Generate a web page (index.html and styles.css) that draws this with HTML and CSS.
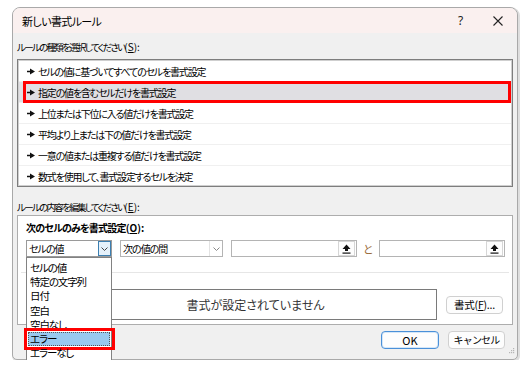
FILE: index.html
```html
<!DOCTYPE html>
<html>
<head>
    <title>新しい書式ルール</title>
    <meta charset="UTF-8">
    <link rel="stylesheet" href="styles.css">
</head>
<body>
    <div class="dialog">
        <div class="titlebar">
            <span class="title">新しい書式ルール</span>
            <span class="help">?</span>
            <span class="close">
                <svg width="10" height="10" viewBox="0 0 10 10"><path d="M0.5 0.5 L9.5 9.5 M9.5 0.5 L0.5 9.5" stroke="#222" stroke-width="1.1" fill="none"/></svg>
            </span>
        </div>

        <div class="content">
            <div class="label first">ルールの種類を選択してください<span class="key">(<u>S</u>):</span></div>
            <ul class="rule-list">
                <li><svg class="bullet" width="8" height="7" viewBox="0 0 8 7"><path d="M0 2.7 H3 V0.5 L8 3.5 L3 6.5 V4.3 H0 Z" fill="#111"/></svg>セルの値に基づいてすべてのセルを書式設定</li>
                <li class="selected"><svg class="bullet" width="8" height="7" viewBox="0 0 8 7"><path d="M0 2.7 H3 V0.5 L8 3.5 L3 6.5 V4.3 H0 Z" fill="#111"/></svg>指定の値を含むセルだけを書式設定<span class="mark"></span></li>
                <li><svg class="bullet" width="8" height="7" viewBox="0 0 8 7"><path d="M0 2.7 H3 V0.5 L8 3.5 L3 6.5 V4.3 H0 Z" fill="#111"/></svg>上位または下位に入る値だけを書式設定</li>
                <li><svg class="bullet" width="8" height="7" viewBox="0 0 8 7"><path d="M0 2.7 H3 V0.5 L8 3.5 L3 6.5 V4.3 H0 Z" fill="#111"/></svg>平均より上または下の値だけを書式設定</li>
                <li><svg class="bullet" width="8" height="7" viewBox="0 0 8 7"><path d="M0 2.7 H3 V0.5 L8 3.5 L3 6.5 V4.3 H0 Z" fill="#111"/></svg>一意の値または重複する値だけを書式設定</li>
                <li><svg class="bullet" width="8" height="7" viewBox="0 0 8 7"><path d="M0 2.7 H3 V0.5 L8 3.5 L3 6.5 V4.3 H0 Z" fill="#111"/></svg>数式を使用して、書式設定するセルを決定</li>
            </ul>

            <div class="label second">ルールの内容を編集してください<span class="key">(<u>E</u>):</span></div>
            <div class="panel">
                <div class="heading">次のセルのみを書式設定<span class="key">(<u>O</u>):</span></div>
                <div class="criteria">
                    <div class="combo combo-type">
                        <span class="combo-text">セルの値</span>
                        <span class="combo-btn active">
                            <svg width="7" height="4" viewBox="0 0 7 4"><path d="M0.5 0.5 L3.5 3.5 L6.5 0.5" stroke="#444" fill="none"/></svg>
                        </span>
                        <ul class="dropdown">
                            <li>セルの値</li>
                            <li>特定の文字列</li>
                            <li>日付</li>
                            <li>空白</li>
                            <li>空白なし</li>
                            <li class="picked">エラー<span class="mark"></span></li>
                            <li>エラーなし</li>
                        </ul>
                    </div>
                    <div class="combo combo-op">
                        <span class="combo-text">次の値の間</span>
                        <span class="combo-btn">
                            <svg width="7" height="4" viewBox="0 0 7 4"><path d="M0.5 0.5 L3.5 3.5 L6.5 0.5" stroke="#888" fill="none"/></svg>
                        </span>
                    </div>
                    <div class="ref-input">
                        <span class="ref-btn">
                            <svg width="9" height="10" viewBox="0 0 9 10"><path d="M4.5 0.5 L8.5 5 L6 5 L6 7 L3 7 L3 5 L0.5 5 Z" fill="#111"/><rect x="0.5" y="8.5" width="8" height="1.2" fill="#111"/></svg>
                        </span>
                    </div>
                    <span class="and">と</span>
                    <div class="ref-input">
                        <span class="ref-btn">
                            <svg width="9" height="10" viewBox="0 0 9 10"><path d="M4.5 0.5 L8.5 5 L6 5 L6 7 L3 7 L3 5 L0.5 5 Z" fill="#111"/><rect x="0.5" y="8.5" width="8" height="1.2" fill="#111"/></svg>
                        </span>
                    </div>
                </div>
                <div class="divider"></div>
                <div class="preview-row">
                    <div class="preview-box">書式が設定されていません</div>
                    <button class="btn btn-format">書式(<u>F</u>)...</button>
                </div>
            </div>

            <div class="footer">
                <button class="btn btn-ok">OK</button>
                <button class="btn btn-cancel">キャンセル</button>
                <svg class="grip" width="6" height="6" viewBox="0 0 6 6"><g fill="#b5b5b5"><rect x="4" y="0" width="1.2" height="1.2"/><rect x="2" y="2" width="1.2" height="1.2"/><rect x="4" y="2" width="1.2" height="1.2"/><rect x="0" y="4" width="1.2" height="1.2"/><rect x="2" y="4" width="1.2" height="1.2"/><rect x="4" y="4" width="1.2" height="1.2"/></g></svg>
            </div>
        </div>
    </div>
</body>
</html>
```

FILE: styles.css
```css
body {
    margin: 0;
    background: #fff;
    font-family: "Noto Sans CJK JP", "Noto Sans", sans-serif;
    font-size: 10px;
    color: #000;
    font-feature-settings: "palt";
}
u { text-decoration: underline; text-underline-offset: 1px; }
.key { letter-spacing: 0; }

.dialog {
    box-sizing: border-box;
    width: 506px;
    height: 353px;
    margin: 7px 0 0 12px;
    border: 1px solid #a9a9a9;
    border-radius: 8px 8px 5px 5px;
    background: #f0f0f0;
    box-shadow: 1px 1px 0 1px #dedede;
}

.titlebar {
    display: flex;
    align-items: center;
    height: 25px;
    padding-left: 9px;
    background: #faf0ef;
    border-radius: 7px 7px 0 0;
}
.title {
    flex: 1;
    font-size: 11px;
    letter-spacing: -0.6px;
    line-height: 14px;
    padding-top: 1px;
}
.help {
    width: 12px;
    font-size: 12px;
    line-height: 14px;
    color: #222;
    font-family: "Segoe UI", "Noto Sans", sans-serif;
    margin-right: 23px;
}
.close {
    display: flex;
    margin-right: 14px;
}

.content {
    padding: 0 4px;
}
.label {
    font-size: 9.5px;
    line-height: 14px;
    letter-spacing: -1.7px;
}
.label .key { font-size: 10px; }
.label.first { margin-top: 7px; }
.label.second { margin-top: 13px; }

.rule-list {
    list-style: none;
    margin: 5px 0 0;
    padding: 1px 0 0;
    box-sizing: border-box;
    width: 496px;
    height: 128px;
    background: #fff;
    border: 1px solid #7d7d7d;
    box-shadow: inset 0 0 0 1px #cfcfcf;
}
.rule-list li {
    position: relative;
    display: flex;
    align-items: center;
    height: 21px;
    padding-left: 8px;
    margin: 0 1px;
    box-sizing: border-box;
    border-bottom: 1px solid #f0f0f0;
    letter-spacing: -1.2px;
}
.rule-list li:last-child { border-bottom: 0; }
.rule-list li.selected { background: #e0dfe3; }
.bullet {
    margin-right: 3px;
}
.rule-list .mark {
    position: absolute;
    left: 4px;
    right: 0;
    top: -1px;
    bottom: -1px;
    border: 3px solid #f00;
}

.panel {
    box-sizing: border-box;
    width: 496px;
    height: 110px;
    margin-top: 1px;
    padding: 5px 3px 0 8px;
    background: #fff;
    border: 1px solid #adadad;
}
.heading {
    font-weight: bold;
    line-height: 14px;
    letter-spacing: -0.8px;
}

.criteria {
    display: flex;
    align-items: center;
    margin-top: 5px;
    height: 17px;
}
.combo {
    position: relative;
    box-sizing: border-box;
    display: flex;
    align-items: center;
    height: 17px;
    border: 1px solid #b4b4b4;
    background: #fff;
}
.combo-type { width: 86px; margin-right: 8px; border-color: #9a9a9a; }
.combo-op { width: 103px; margin-right: 8px; }
.combo-text {
    flex: 1;
    padding-left: 2px;
    line-height: 14px;
    letter-spacing: -1px;
}
.combo-btn {
    display: flex;
    align-items: center;
    justify-content: center;
    box-sizing: border-box;
    width: 13px;
    height: 15px;
    border-left: 1px solid #e3e3e3;
}
.combo-btn.active {
    background: #e5f1fb;
    border: 1px solid #3c7fb1;
}

.dropdown {
    position: absolute;
    left: -1px;
    top: 16px;
    box-sizing: border-box;
    width: 86px;
    height: 104px;
    margin: 0;
    padding: 3px 0 0;
    list-style: none;
    background: #fff;
    border: 1px solid #828282;
}
.dropdown li {
    position: relative;
    height: 14.2px;
    margin: 0 1px;
    padding-left: 2px;
    line-height: 14px;
    font-size: 10.5px;
    letter-spacing: -1.1px;
}
.dropdown li.picked {
    background: #99c9ef;
    outline: 1px dotted #555;
    outline-offset: -1px;
}
.dropdown .mark {
    position: absolute;
    left: -4px;
    right: -5px;
    top: -4px;
    bottom: -4px;
    border: 3px solid #f00;
}

.ref-input {
    box-sizing: border-box;
    display: flex;
    justify-content: flex-end;
    align-items: center;
    width: 126px;
    height: 17px;
    padding-right: 1px;
    border: 1px solid #b4b4b4;
    background: #fff;
}
.ref-btn {
    display: flex;
    align-items: center;
    justify-content: center;
    box-sizing: border-box;
    width: 17px;
    height: 15px;
    border: 1px solid #d6d6d6;
    background: #fdfdfd;
}
.and {
    width: 22px;
    text-align: center;
    font-size: 11px;
    color: #9a6a3a;
    line-height: 14px;
}

.divider {
    height: 1px;
    margin: 15px 0 0 -5px;
    background: #e6e6e6;
}

.preview-row {
    display: flex;
    align-items: center;
    margin-top: 16px;
}
.preview-box {
    box-sizing: border-box;
    width: 363px;
    height: 31px;
    margin-left: 48px;
    border: 1px solid #7a7a7a;
    display: flex;
    align-items: center;
    justify-content: center;
    font-size: 12px;
    color: #333;
    letter-spacing: 0;
}

.btn {
    box-sizing: border-box;
    height: 18px;
    padding: 0;
    font-family: inherit;
    font-size: 10px;
    line-height: 14px;
    color: #000;
    background: #fdfdfd;
    border: 1px solid #d0d0d0;
    border-radius: 4px;
    letter-spacing: -0.8px;
}
.btn-format {
    width: 57px;
    margin-left: 9px;
    font-size: 10.5px;
    letter-spacing: -0.2px;
}

.footer {
    display: flex;
    justify-content: flex-end;
    align-items: flex-start;
    padding-top: 6px;
}
.btn-ok {
    width: 58px;
    font-size: 11px;
    letter-spacing: 0;
    border-color: #4a90d9;
    box-shadow: inset 0 0 0 1px #d5e7f8;
}
.btn-cancel {
    width: 57px;
    margin-left: 9px;
}
.grip {
    margin: 17px -2px 0 4px;
}
```
